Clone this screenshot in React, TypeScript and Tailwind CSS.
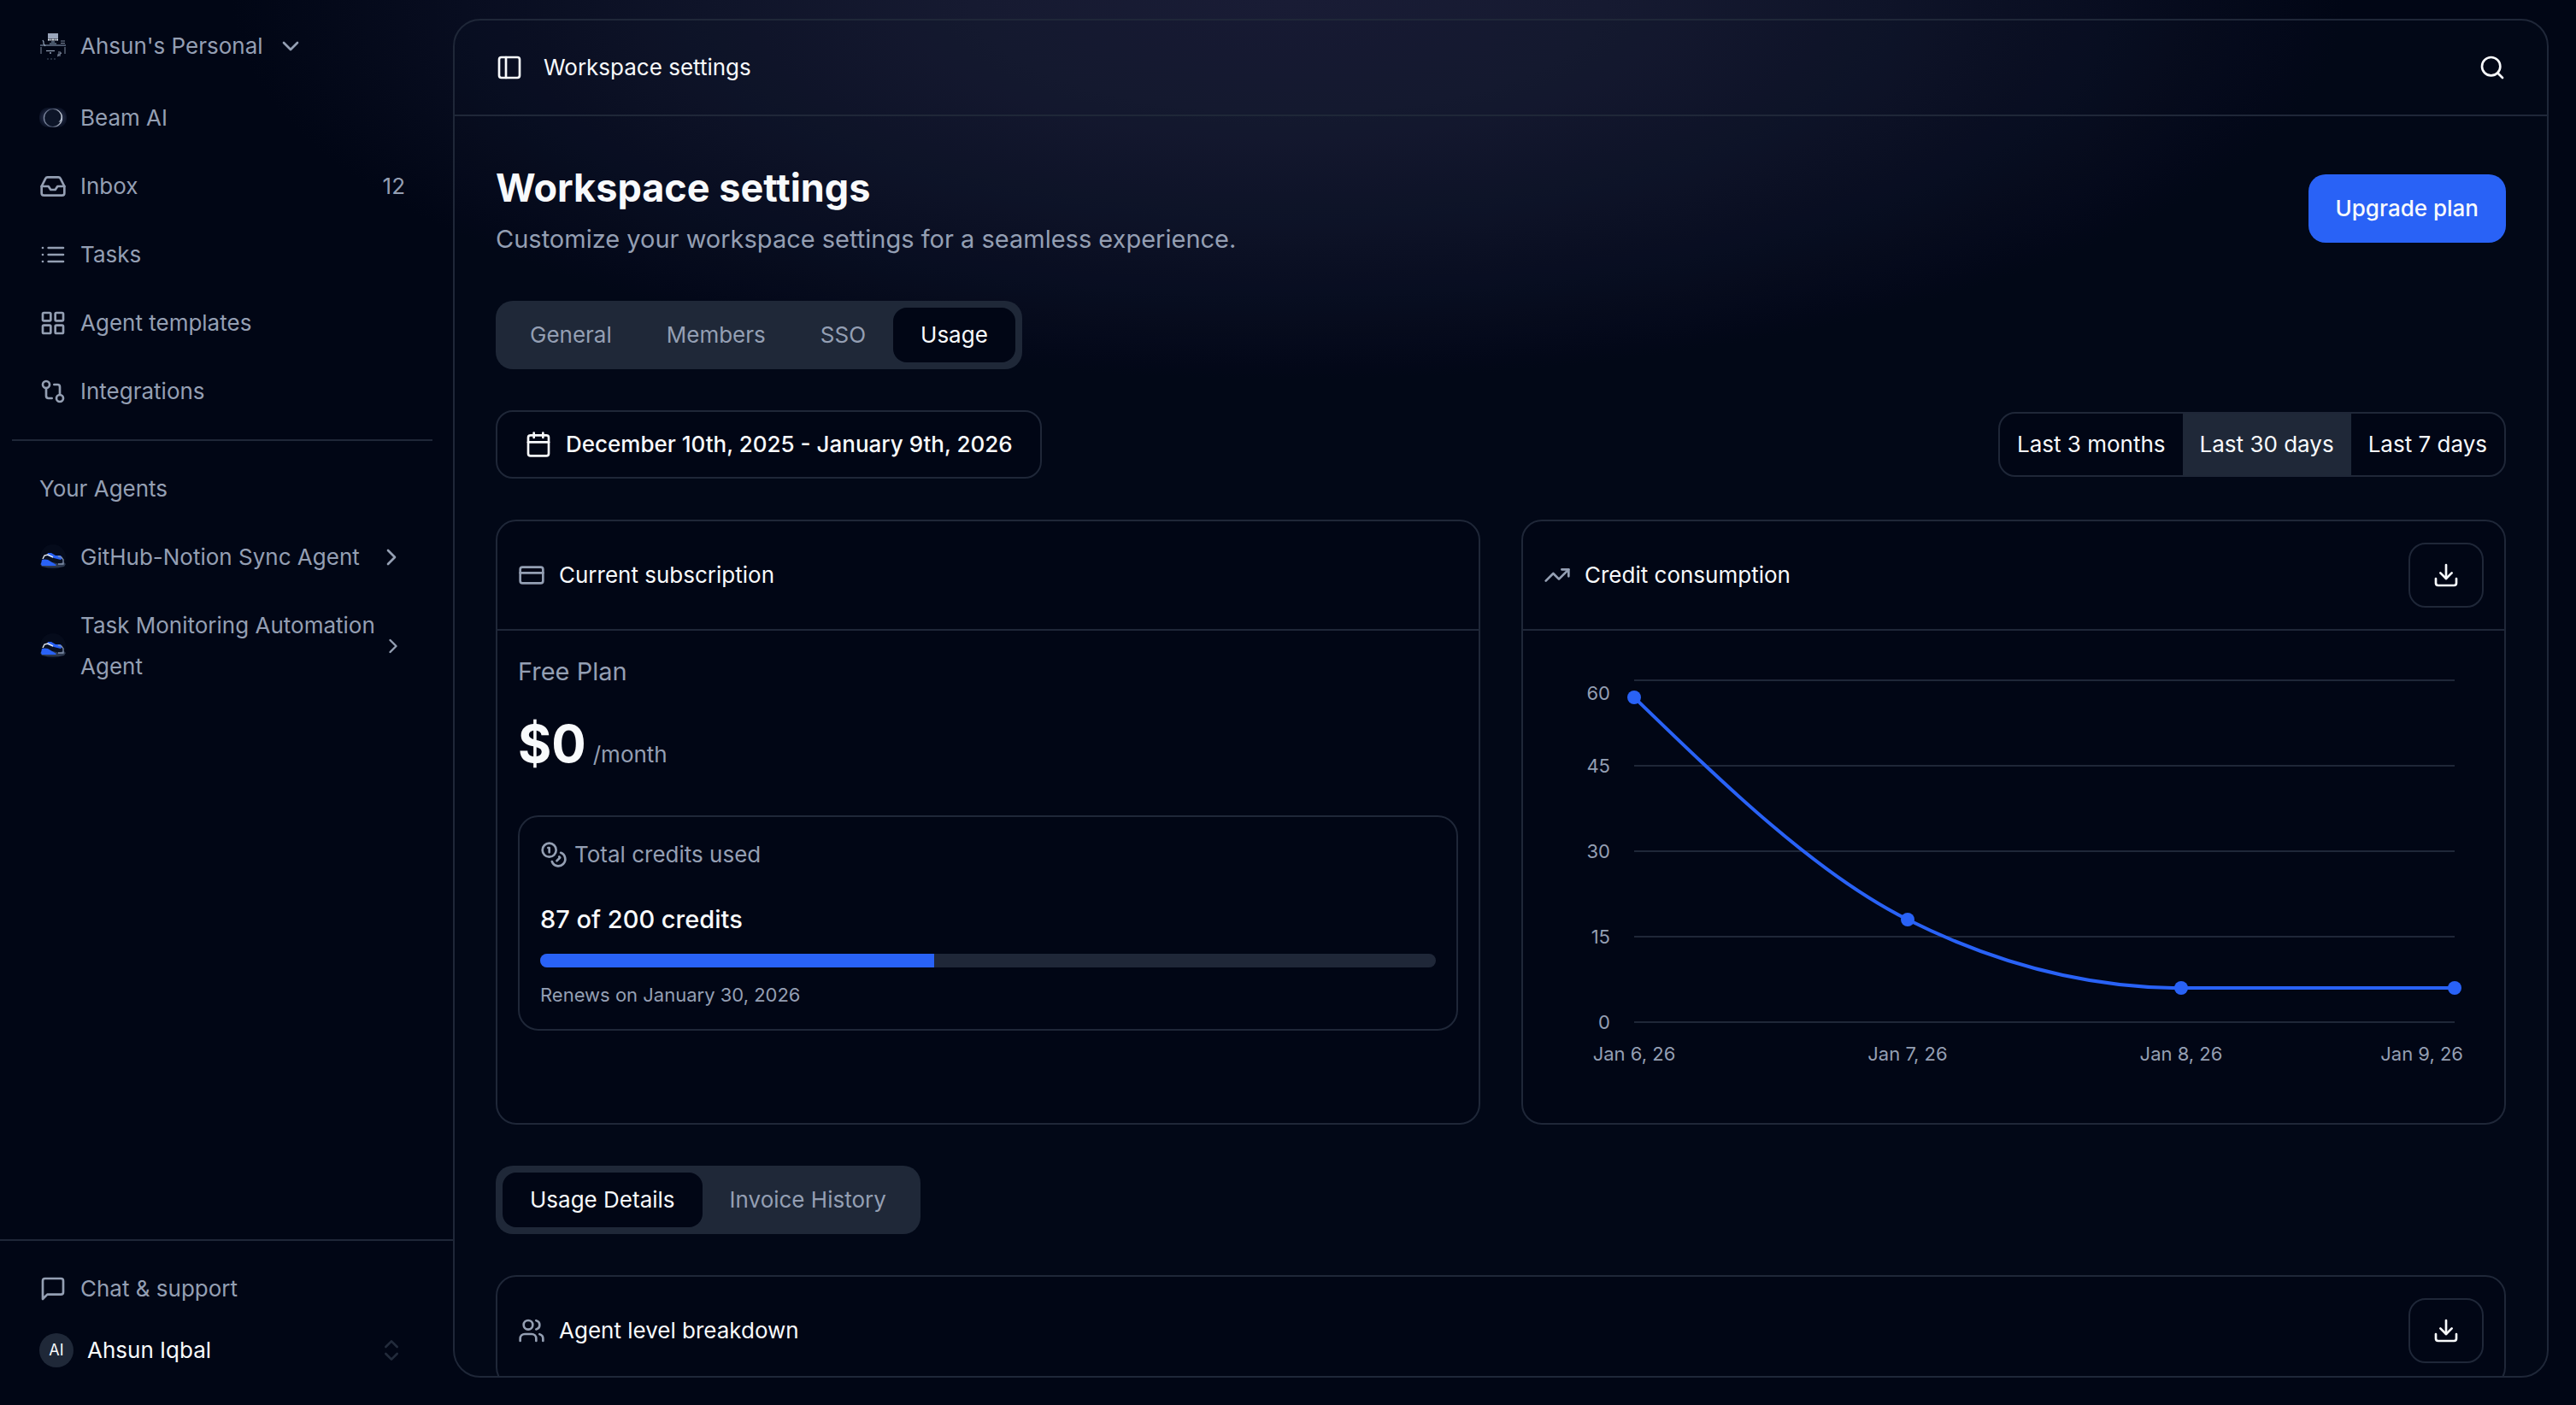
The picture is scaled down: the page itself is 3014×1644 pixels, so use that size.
import type { ReactNode } from 'react';
import {
  Calendar,
  ChevronDown,
  ChevronRight,
  ChevronsUpDown,
  CreditCard,
  Download,
  GitCompare,
  Inbox,
  LayoutGrid,
  PanelLeft,
  Search,
  TrendingUp,
  Users,
} from 'lucide-react';

function StrokeIcon({ children }: { children: ReactNode }) {
  return (
    <svg
      viewBox="0 0 24 24"
      className="size-8 shrink-0"
      fill="none"
      stroke="currentColor"
      strokeWidth="2"
      strokeLinecap="round"
      strokeLinejoin="round"
      aria-hidden="true"
    >
      {children}
    </svg>
  );
}

const ListIcon = () => (
  <StrokeIcon>
    <path d="M8 6h13M8 12h13M8 18h13M3 6h.01M3 12h.01M3 18h.01" />
  </StrokeIcon>
);

const ChatIcon = () => (
  <StrokeIcon>
    <path d="M21 15a2 2 0 0 1-2 2H7l-4 4V5a2 2 0 0 1 2-2h14a2 2 0 0 1 2 2z" />
  </StrokeIcon>
);

const CoinsIcon = () => (
  <StrokeIcon>
    <circle cx="8" cy="8" r="6" />
    <path d="M18.09 10.37A6 6 0 1 1 10.34 18" />
    <path d="M7 6h1v4" />
    <path d="m16.71 13.88.7.71-2.82 2.82" />
  </StrokeIcon>
);

const DeskAvatar = () => (
  <svg viewBox="0 0 32 32" className="size-8 shrink-0" aria-hidden="true">
    <rect x="10" y="1" width="12" height="6" fill="#9aa5ba" />
    <path d="M10 8.5h12" stroke="#e2e8f0" strokeWidth="2" strokeDasharray="2 .5" />
    <rect x="14" y="10" width="4" height="2" fill="#475569" />
    <rect x="12" y="12" width="8" height="2" fill="#475569" />
    <rect x="1" y="14" width="30" height="2" fill="#4b566b" />
    <path d="M2 17v8M30 17v8" stroke="#7c889d" strokeWidth="1" />
    <path d="M4 9l1 2v2l2 3" stroke="#94a3b8" strokeWidth="1.2" fill="none" />
    <path d="M25 10h5M25 12.5h5" stroke="#7c889d" strokeWidth="1" />
    <path d="M8 21.500h10" stroke="#94a3b8" strokeWidth="1.2" />
    <path d="M12 24h2" stroke="#94a3b8" strokeWidth="1.4" />
    <path d="M22 23h3v2h-3v2h3M21 28l5-4" stroke="#7c889d" strokeWidth="1" fill="none" />
    <path d="M9 31h2M13 31h2M17 31h2" stroke="#475569" strokeWidth="1" />
  </svg>
);

const OrbAvatar = () => (
  <svg viewBox="0 0 32 32" className="size-8 shrink-0" aria-hidden="true">
    <defs>
      <radialGradient id="orb-halo">
        <stop offset="55%" stopColor="#2c3551" />
        <stop offset="100%" stopColor="#0d1428" />
      </radialGradient>
      <linearGradient id="orb-rim" x1="0" x2="1" y1="0" y2="0">
        <stop offset="0%" stopColor="#8791a8" />
        <stop offset="45%" stopColor="#39435c" />
        <stop offset="100%" stopColor="#d5dbe6" />
      </linearGradient>
    </defs>
    <rect x="0" y="4" width="32" height="23" rx="10" fill="url(#orb-halo)" />
    <circle cx="16" cy="16" r="10.500" fill="#0d1528" stroke="url(#orb-rim)" strokeWidth="1.2" />
    <path d="M26 13q2 3.500-.5 7l-3 1q3-3 3.500-8z" fill="#aab4c6" />
  </svg>
);

const CarAvatar = () => (
  <svg viewBox="0 0 32 32" className="size-8 shrink-0" aria-hidden="true">
    <circle cx="16" cy="16" r="15" fill="#050b1b" />
    <path d="M1 24l2-2h26l2 2-2 3q-13 3-26 0z" fill="#2c384e" />
    <path d="M4 18q2-6 8-6l13 3q3 1 3 6l-4 3-8-2z" fill="#0a1122" />
    <path d="M3 19q3-1 7 0l10 6-1 1H3l-1-2z" fill="#2962f6" />
    <path d="M10 11l4 0 5 3 6 0 2 3-2 2-8-2-8-3z" fill="#2962f6" />
    <path d="M4 18l2-4 4-1 6 3" fill="none" stroke="#e2e8f0" strokeWidth="1.4" />
    <path d="M22 15l4 1 2 3v5l-6 0" fill="none" stroke="#8190aa" strokeWidth="1.3" />
  </svg>
);

function NavItem({ icon, label, count }: { icon: ReactNode; label: string; count?: number }) {
  return (
    <a href="#" className="flex h-20 items-center gap-4 px-8">
      {icon}
      <span>{label}</span>
      {count !== undefined && <span className="ml-auto">{count}</span>}
    </a>
  );
}

function AgentItem({ label, chevron }: { label: string; chevron: string }) {
  return (
    <a href="#" className="flex items-center px-8 py-4 leading-[48px]">
      <CarAvatar />
      <span className="ml-4 flex-1">{label}</span>
      <ChevronRight className={chevron} />
    </a>
  );
}

function Sidebar() {
  return (
    <aside className="flex w-[530px] shrink-0 flex-col">
      <div className="flex flex-1 flex-col pt-3.5 pr-6 pl-3.5">
        <button type="button" className="mb-1 flex h-20 items-center gap-4 px-8 text-left">
          <DeskAvatar />
          <span>Ahsun's Personal</span>
          <ChevronDown className="size-8" />
        </button>
        <nav aria-label="Main">
          <NavItem icon={<OrbAvatar />} label="Beam AI" />
          <NavItem icon={<Inbox className="size-8" />} label="Inbox" count={12} />
          <NavItem icon={<ListIcon />} label="Tasks" />
          <NavItem icon={<LayoutGrid className="size-8" />} label="Agent templates" />
          <NavItem icon={<GitCompare className="size-8" />} label="Integrations" />
        </nav>
        <hr className="my-4 border-t-2 border-[#1f2738]" />
        <h2 className="flex h-20 items-center px-8">Your Agents</h2>
        <nav aria-label="Your Agents">
          <AgentItem label="GitHub-Notion Sync Agent" chevron="size-8 shrink-0" />
          <AgentItem label="Task Monitoring Automation Agent" chevron="size-7 shrink-0" />
        </nav>
      </div>
      <div className="border-t-2 border-[#1f2738] pt-4 pr-6 pb-8 pl-3.5">
        <a href="#" className="flex h-20 items-center gap-4 px-8">
          <ChatIcon />
          <span>Chat &amp; support</span>
        </a>
        <button type="button" className="flex h-16 w-full items-center gap-4 px-8 text-left text-slate-50">
          <span className="flex size-10 items-center justify-center rounded-full bg-[#1f2838] text-lg">AI</span>
          <span className="flex-1">Ahsun Iqbal</span>
          <ChevronsUpDown className="size-8 text-[#222b3b]" />
        </button>
      </div>
    </aside>
  );
}

function Tabs({ items, active, label }: { items: string[]; active: string; label: string }) {
  return (
    <div role="tablist" aria-label={label} className="flex h-20 w-fit rounded-[20px] bg-[#1f2838] p-2">
      {items.map((item) => (
        <button
          key={item}
          type="button"
          role="tab"
          aria-selected={item === active}
          className={
            item === active ? 'rounded-2xl bg-[#010615] px-8 text-slate-50' : 'rounded-2xl px-8'
          }
        >
          {item}
        </button>
      ))}
    </div>
  );
}

function Card({
  icon,
  title,
  download,
  children,
}: {
  icon: ReactNode;
  title: string;
  download?: boolean;
  children?: ReactNode;
}) {
  return (
    <section className="min-w-0 rounded-3xl border-2 border-[#1f2738] bg-[#010615]">
      <header className="flex h-32 items-center gap-4 border-b-2 border-[#1f2738] px-6">
        {icon}
        <h2 className="text-slate-50">{title}</h2>
        {download && (
          <button
            type="button"
            aria-label={`Download ${title}`}
            className="ml-auto flex h-[76px] w-[88px] items-center justify-center rounded-[20px] border-2 border-[#1f2738] text-slate-50"
          >
            <Download className="size-8" />
          </button>
        )}
      </header>
      {children}
    </section>
  );
}

const CREDITS_USED = 87;
const CREDITS_TOTAL = 200;

function Subscription() {
  const percent = Math.ceil((CREDITS_USED / CREDITS_TOTAL) * 100);
  return (
    <div className="p-6">
      <p className="text-[29px] leading-[48px]">Free Plan</p>
      <p className="mt-6 flex h-[72px] items-baseline gap-2 leading-[72px]">
        <span className="text-[60px] font-bold text-slate-50">$0</span>
        <span>/month</span>
      </p>
      <div className="mt-12 rounded-3xl border-2 border-[#1f2738] p-6">
        <p className="flex h-10 items-center gap-2">
          <CoinsIcon />
          Total credits used
        </p>
        <p className="mt-8 text-[29px] leading-[48px] font-medium text-slate-50">
          {CREDITS_USED} of {CREDITS_TOTAL} credits
        </p>
        <div
          role="progressbar"
          aria-label="Total credits used"
          aria-valuenow={CREDITS_USED}
          aria-valuemax={CREDITS_TOTAL}
          className="mt-4 h-4 overflow-hidden rounded-full bg-[#1f2738]"
        >
          <div className="h-full bg-[#2962f6]" style={{ width: `${percent}%` }} />
        </div>
        <p className="mt-4 text-[22px] leading-8">Renews on January 30, 2026</p>
      </div>
    </div>
  );
}

const gridLines = [
  { value: 60, y: 34, labelY: 49 },
  { value: 45, y: 134, labelY: 134 },
  { value: 30, y: 234, labelY: 234 },
  { value: 15, y: 334, labelY: 334 },
  { value: 0, y: 434, labelY: 434 },
];

const points = [
  { label: 'Jan 6, 26', x: 106, y: 54 },
  { label: 'Jan 7, 26', x: 426, y: 314 },
  { label: 'Jan 8, 26', x: 746, y: 394 },
  { label: 'Jan 9, 26', x: 1066, y: 394 },
];

function CreditChart() {
  return (
    <div className="p-6">
      <svg
        viewBox="0 0 1100 528"
        className="block w-full text-[22px]"
        fill="#949fb3"
        role="img"
        aria-label="Credit consumption per day"
      >
        {gridLines.map((line) => (
          <g key={line.value}>
            <path d={`M106 ${line.y}H1066`} stroke="#1f2738" strokeWidth="2" />
            <text x="78" y={line.labelY + 8} textAnchor="end">
              {line.value}
            </text>
          </g>
        ))}
        <path
          d="M106 54C212.670 157.330 319.330 260.670 426 314C532.670 367.330 639.330 394 746 394H1066"
          fill="none"
          stroke="#2962f6"
          strokeWidth="4"
        />
        {points.map((point, index) => {
          const last = index === points.length - 1;
          return (
            <g key={point.label}>
              <circle cx={point.x} cy={point.y} r="8" fill="#2962f6" />
              <text x={last ? 1076 : point.x} y="479" textAnchor={last ? 'end' : 'middle'}>
                {point.label}
              </text>
            </g>
          );
        })}
      </svg>
    </div>
  );
}

const ranges = ['Last 3 months', 'Last 30 days', 'Last 7 days'];

export default function App() {
  return (
    <div className="flex h-screen overflow-hidden bg-[#010615] bg-[radial-gradient(ellipse_41%_27%_at_50%_0%,#191c35_0%,#161a31_30%,#0f1429_55%,#080d20_78%,#010615_100%)] font-['Inter','Liberation_Sans',sans-serif] text-[26px] leading-10 text-[#949fb3]">
      <Sidebar />
      <div className="flex min-w-0 flex-1 flex-col pt-[22px] pr-8 pb-8">
        <main className="flex min-h-0 flex-1 flex-col overflow-hidden rounded-[32px] border-2 border-[#1f2738] bg-[#0f172a]/15">
          <header className="flex h-28 shrink-0 items-center gap-6 border-b-2 border-[#1f2738] px-12 text-slate-50">
            <button type="button" aria-label="Toggle sidebar">
              <PanelLeft className="size-8" />
            </button>
            <span>Workspace settings</span>
            <button type="button" aria-label="Search" className="ml-auto">
              <Search className="size-8" />
            </button>
          </header>
          <div className="flex flex-col gap-12 p-12">
            <div className="flex items-center justify-between">
              <div>
                <h1 className="text-[45px] leading-[72px] font-bold text-slate-50">Workspace settings</h1>
                <p className="text-[29px] leading-[48px]">
                  Customize your workspace settings for a seamless experience.
                </p>
              </div>
              <button type="button" className="h-20 rounded-[20px] bg-[#2962f6] px-8 font-medium text-slate-50">
                Upgrade plan
              </button>
            </div>
            <Tabs label="Settings" items={['General', 'Members', 'SSO', 'Usage']} active="Usage" />
            <div className="flex items-center justify-between">
              <button
                type="button"
                className="flex h-20 items-center gap-4 rounded-[20px] border-2 border-[#1f2738] bg-[#010615] px-8 font-medium text-slate-50"
              >
                <Calendar className="size-8" />
                December 10th, 2025 - January 9th, 2026
              </button>
              <div
                role="group"
                aria-label="Date range"
                className="flex h-[76px] overflow-hidden rounded-[20px] border-2 border-[#1f2738] bg-[#010615] text-slate-50"
              >
                {ranges.map((range) => (
                  <button
                    key={range}
                    type="button"
                    aria-pressed={range === 'Last 30 days'}
                    className={range === 'Last 30 days' ? 'bg-[#1f2838] px-5' : 'px-5'}
                  >
                    {range}
                  </button>
                ))}
              </div>
            </div>
            <div className="grid grid-cols-2 gap-12">
              <Card icon={<CreditCard className="size-8" />} title="Current subscription">
                <Subscription />
              </Card>
              <Card icon={<TrendingUp className="size-8" />} title="Credit consumption" download>
                <CreditChart />
              </Card>
            </div>
            <Tabs label="Details" items={['Usage Details', 'Invoice History']} active="Usage Details" />
            <Card icon={<Users className="size-8" />} title="Agent level breakdown" download />
          </div>
        </main>
      </div>
    </div>
  );
}
